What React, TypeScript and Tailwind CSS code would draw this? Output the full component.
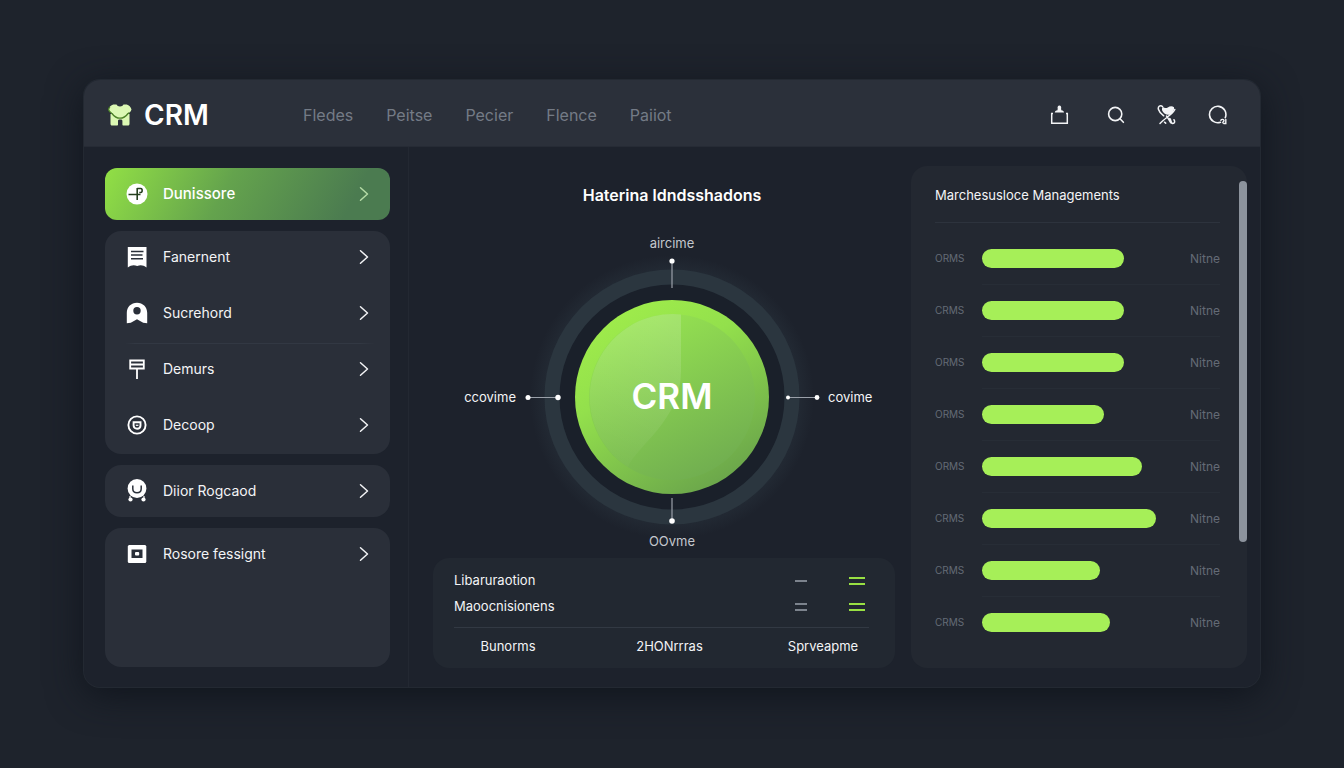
import { useState } from 'react'
import type { ReactNode } from 'react'

const NAV = ['Fledes', 'Peitse', 'Pecier', 'Flence', 'Paiiot']

const BARS = [
  { id: 1, label: 'ORMS', width: 71, value: 'Nitne' },
  { id: 2, label: 'CRMS', width: 71, value: 'Nitne' },
  { id: 3, label: 'ORMS', width: 71, value: 'Nitne' },
  { id: 4, label: 'ORMS', width: 61, value: 'Nitne' },
  { id: 5, label: 'ORMS', width: 80, value: 'Nitne' },
  { id: 6, label: 'CRMS', width: 87, value: 'Nitne' },
  { id: 7, label: 'CRMS', width: 59, value: 'Nitne' },
  { id: 8, label: 'CRMS', width: 64, value: 'Nitne' },
]

function Logo() {
  return (
    <svg className="size-6 shrink-0" viewBox="0 0 24 24" fill="#dcf8b4" aria-hidden="true">
      <path d="M2.5 11h19v10c0 .9-.6 1.500-1.500 1.500h-4.600c-.6 0-1-.4-1-1V18c0-1-.8-1.400-2.200-1.400S10 17 10 18v3.500c0 .6-.4 1-1 1H4c-.9 0-1.500-.6-1.500-1.500z" />
      <path
        d="M5.300 1.500h3.200c.6 1.300 1.800 2 3.500 2s2.900-.7 3.500-2h3.200c2.400.7 4.100 2.600 4.800 5-.5 1.900-1.800 3.200-3.500 4-2 2.800-4.700 4.700-8 4.700s-6-1.900-8-4.700c-1.700-.8-3-2.100-3.500-4 .7-2.400 2.400-4.300 4.800-5z"
        stroke="#4d8228"
        strokeWidth="1.300"
        strokeDasharray="0 26 29 40"
      />
    </svg>
  )
}

function Chevron() {
  return (
    <svg className="h-4 w-2.5 shrink-0" viewBox="0 0 10 16" fill="none" stroke="currentColor" strokeWidth="1.5" strokeLinecap="round" strokeLinejoin="round" aria-hidden="true">
      <path d="M1.500 1.800 8.500 8l-7 6.200" />
    </svg>
  )
}

const ICONS: Record<string, ReactNode> = {
  dashboard: (
    <>
      <circle cx="11" cy="11" r="10.5" fill="#fff" />
      <path d="M2.500 11.500h12M11.200 5v12M11.200 5.500h3.600c1.800 0 1.800 4 0 4h-1.500" stroke="#26401f" strokeWidth="1.6" fill="none" />
    </>
  ),
  receipt: (
    <>
      <path d="M1.800 1h18.700v20.500c-3.200-2.600-6.300-2.700-9.300-1.500-3-1.200-6.200-1.100-9.400 1.500z" fill="#fff" />
      <path d="M5 5.500h12.500M5 9h11.500M5 12.800h12" stroke="#2a303a" strokeWidth="1.5" />
    </>
  ),
  user: (
    <path fillRule="evenodd" fill="#fff" d="M11 .8c5.800 0 10.200 4.200 10.200 10V21.300l-4-.6L11 17.200l-6.200 3.500-4 .6V10.800C.8 5 5.200.8 11 .8zM11 5a3.700 3.700 0 1 0 0 7.400A3.700 3.700 0 0 0 11 5z" />
  ),
  sign: (
    <path d="M4.200 2.500h13.600v8H4.200zM4.200 6.500h13.600M11 10.500V21" fill="none" stroke="#fff" strokeWidth="1.8" />
  ),
  target: (
    <g fill="none" stroke="#fff" strokeWidth="1.9">
      <circle cx="11" cy="11" r="8.6" />
      <path d="M7.600 8.300h6.900v3.200c0 2-1.400 3.200-3.400 3.200s-3.500-1.200-3.500-3.200z" />
      <path d="M9.800 11.300h2.600" strokeWidth="1.2" />
    </g>
  ),
  smile: (
    <>
      <circle cx="11" cy="8.5" r="9.400" fill="#fff" />
      <path d="M6.800 5.500v3.300c0 2.500 1.800 4 4.200 4s4.200-1.500 4.200-4V5.500" fill="none" stroke="#2a303a" strokeWidth="1.5" />
      <circle cx="4.5" cy="19.5" r="2.100" fill="#fff" />
      <circle cx="17.5" cy="19.500" r="2.100" fill="#fff" />
      <path d="M4 16v3M18 16v3" stroke="#fff" strokeWidth="1.2" />
    </>
  ),
  square: (
    <>
      <rect x="1.8" y="2" width="18.5" height="18" rx="1.5" fill="#fff" />
      <rect x="5.500" y="6.500" width="11" height="8.500" fill="#2a303a" />
      <rect x="9" y="9" width="4.200" height="3.600" rx="1" fill="#fff" />
    </>
  ),
}

function MenuItem({ icon, label, divider }: { icon: string; label: string; divider?: boolean }) {
  return (
    <button
      type="button"
      className={`flex h-[52px] w-full cursor-pointer items-center text-left text-sm text-gray-100 ${divider ? 'bg-[linear-gradient(90deg,transparent_20px,#323843_30px,#323843_255px,transparent_270px)] bg-[length:100%_1px] bg-no-repeat' : ''}`}
    >
      <svg className="ml-[21px] size-[22px] shrink-0 overflow-visible" viewBox="0 0 22 22" aria-hidden="true">
        {ICONS[icon]}
      </svg>
      <span className="ml-[15px] flex-1">{label}</span>
      <span className="mr-[21px]">
        <Chevron />
      </span>
    </button>
  )
}

function Header() {
  const [active, setActive] = useState('')
  return (
    <header className="flex h-[67px] items-center border-b border-[#262b35] bg-[#2b303a] pt-[3px] pr-8">
      <div className="flex w-[219px] shrink-0 items-center gap-3 pl-6">
        <Logo />
        <span className="text-[28px] leading-8 font-semibold text-white">CRM</span>
      </div>
      <nav className="flex flex-1 gap-[33px] text-base text-[#747b86]">
        {NAV.map(item => (
          <a key={item} href="#" onClick={() => setActive(item)} className={active === item ? 'text-white' : 'hover:text-gray-300'}>
            {item}
          </a>
        ))}
      </nav>
      <div className="flex items-center gap-[31px] text-gray-100">
        <button type="button" aria-label="Inbox" className="mr-1.5 cursor-pointer">
          <svg className="size-5" viewBox="0 0 20 20" fill="none" stroke="currentColor" strokeWidth="1.5">
            <path d="M4 8.500H2.700v9.700h15.600V8.500H17" />
            <path d="M5.800 7.600c0-1.400 1-2 2.700-2.300L8.700 3.500C8.200 2 9 .4 10.400.4s2.200 1.600 1.700 3.100l.2 1.800c1.700.3 2.700.9 2.700 2.300z" fill="currentColor" stroke="none" />
          </svg>
        </button>
        <button type="button" aria-label="Search" className="cursor-pointer">
          <svg className="size-5" viewBox="0 0 20 20" fill="none" stroke="currentColor" strokeWidth="1.6" strokeLinecap="round">
            <circle cx="9.200" cy="9" r="6.600" />
            <path d="m14 13.800 3.400 3.500" />
          </svg>
        </button>
        <button type="button" aria-label="Tools" className="cursor-pointer">
          <svg className="size-5" viewBox="0 0 20 20" fill="none" stroke="currentColor" strokeWidth="1.5" strokeLinecap="round">
            <path d="M5.500 1.500C3.500-.2.500 1.500 1.500 4.500c.6 2.200 3 4.700 5.200 6.300" />
            <path d="M7.500 8.500C4.500 6 4.500 3.500 5.800 1.800c1.300 1.500 3.200 1.700 5 .6 2-1.300 4.600-1.400 6.200-.2.500 2-.6 5-3 6.700-2 1.300-4.500 1-6.500-.4z" fill="currentColor" stroke="none" />
            <path d="M17.800 4.500C16 9 8 13 3 18.500M9.500 11c1.800 2.200 2.700 4.500 4.300 6.800M12.800 13.500c1.500 1.500.8 5 3 5 1.800 0 2.500-2 1.200-3.800M7.500 17.200l1.200 1" />
          </svg>
        </button>
        <button type="button" aria-label="Account" className="cursor-pointer">
          <svg className="size-5" viewBox="0 0 20 20" fill="none" stroke="currentColor" strokeWidth="1.6" strokeLinecap="round">
            <path d="M12.500 17.200a8.200 8.200 0 1 1 4.800-4.600" />
            <path d="M12.800 15.200c1-1.200 3-1 3.200.3.100 1-1.300 1.200-1.200 2.300M17.800 14.500v4h-2" strokeWidth="1.4" />
          </svg>
        </button>
      </div>
    </header>
  )
}

function Sidebar() {
  return (
    <aside className="flex flex-col gap-[11px] border-r border-[#232832] pt-[21px] pr-[18px] pb-5 pl-[21px]">
      <button
        type="button"
        className="flex h-[52px] w-full cursor-pointer items-center rounded-xl bg-linear-[118deg,#92e045_0%,#64a34d_42%,#4b7b50_85%] text-left text-[15px] font-medium text-white"
      >
        <svg className="ml-[21px] size-[22px] shrink-0" viewBox="0 0 22 22" aria-hidden="true">
          {ICONS.dashboard}
        </svg>
        <span className="ml-[15px] flex-1">Dunissore</span>
        <span className="mr-[21px] text-[#b5dba6]">
          <Chevron />
        </span>
      </button>

      <div className="flex flex-col gap-1 rounded-2xl bg-[#2a2f39] pb-[3px]">
        <MenuItem icon="receipt" label="Fanernent" />
        <MenuItem icon="user" label="Sucrehord" />
        <MenuItem icon="sign" label="Demurs" divider />
        <MenuItem icon="target" label="Decoop" />
      </div>

      <div className="rounded-2xl bg-[#2a2f39]">
        <MenuItem icon="smile" label="Diior Rogcaod" />
      </div>

      <div className="min-h-[139px] flex-1 rounded-2xl bg-[#2a2f39]">
        <MenuItem icon="square" label="Rosore fessignt" />
      </div>
    </aside>
  )
}

function Dial() {
  return (
    <svg className="h-[272px] w-[296px] overflow-visible" viewBox="0 0 296 272" role="img" aria-label="CRM">
      <defs>
        <linearGradient id="disc" x1="0.2" y1="0.05" x2="0.75" y2="0.95">
          <stop offset="0" stopColor="#9fec4b" />
          <stop offset="0.35" stopColor="#93e04c" />
          <stop offset="1" stopColor="#6ba64b" />
        </linearGradient>
        <linearGradient id="inner" x1="0.2" y1="0" x2="0.7" y2="1">
          <stop offset="0" stopColor="#99e751" />
          <stop offset="1" stopColor="#70ad50" />
        </linearGradient>
        <linearGradient id="wedge" x1="0.6" y1="0" x2="0.4" y2="1">
          <stop offset="0" stopColor="#fff" stopOpacity="0.16" />
          <stop offset="1" stopColor="#fff" stopOpacity="0.02" />
        </linearGradient>
        <radialGradient id="glow">
          <stop offset="0.82" stopColor="#2b3640" stopOpacity="0.6" />
          <stop offset="1" stopColor="#2b3640" stopOpacity="0" />
        </radialGradient>
      </defs>
      <circle cx="148" cy="136" r="142" fill="url(#glow)" />
      <circle cx="148" cy="136" r="120" fill="#1a202a" stroke="#2b363f" strokeWidth="15" />
      <circle cx="148" cy="136" r="97" fill="url(#disc)" />
      <circle cx="148" cy="136" r="83" fill="url(#inner)" />
      <path d="M157 53.500A83 83 0 0 0 104 206C112 185 157 160 157 110z" fill="url(#wedge)" />
      <g stroke="#9aa0a9" strokeWidth="1.2">
        <path d="M148 0v27M148 237v24M4 136.500h30M264 136.500h29" />
      </g>
      <g fill="#fff">
        <circle cx="148" cy="0" r="2.600" />
        <circle cx="148" cy="260" r="2.800" />
        <circle cx="4" cy="136.500" r="2.500" />
        <circle cx="34" cy="136.500" r="2.700" />
        <circle cx="264" cy="136.500" r="2" />
        <circle cx="293" cy="136.500" r="2.400" />
      </g>
      <text x="148" y="148" textAnchor="middle" fill="#fff" className="text-[35px] font-semibold">
        CRM
      </text>
    </svg>
  )
}

function Dash({ double, green }: { double?: boolean; green?: boolean }) {
  return (
    <span className={`flex flex-col gap-1 ${green ? 'w-4 text-[#98e043]' : 'w-3 text-[#7c838d]'}`}>
      <span className="h-0.5 bg-current" />
      {double && <span className="h-0.5 bg-current" />}
    </span>
  )
}

function Overview() {
  return (
    <section className="flex flex-col pt-9 pr-4 pb-[19px] pl-6">
      <div className="pl-4 text-center text-[13px] leading-4 text-[#c3c7cd]">
        <h1 className="mb-7 text-base leading-6 font-semibold text-white">Haterina ldndsshadons</h1>
        <p>aircime</p>
        <div className="mt-2.5 grid grid-cols-[1fr_296px_1fr] items-center gap-2 text-gray-100">
          <span className="text-right">ccovime</span>
          <Dial />
          <span className="text-left">covime</span>
        </div>
        <p>OOvme</p>
      </div>

      <div className="mt-auto rounded-2xl bg-[#222831] pt-2.5 pr-[26px] pb-0.5 pl-[21px] text-[13px] text-gray-100">
        <div className="flex h-[26px] items-center">
          <span className="flex-1">Libaruraotion</span>
          <Dash />
          <span className="mr-1 ml-[42px]"><Dash double green /></span>
        </div>
        <div className="flex h-[26px] items-center">
          <span className="flex-1">Maoocnisionens</span>
          <Dash double />
          <span className="mr-1 ml-[42px]"><Dash double green /></span>
        </div>
        <div className="mt-[7px] grid h-[39px] grid-cols-[108px_1fr_92px] items-center border-t border-[#323943] text-center">
          <span>Bunorms</span>
          <span>2HONrrras</span>
          <span>Sprveapme</span>
        </div>
      </div>
    </section>
  )
}

function Management() {
  return (
    <section className="flex py-[19px] pr-[13px]">
      <div className="flex flex-1 rounded-2xl bg-[#232831]">
        <div className="flex-1 pr-[19px] pl-6">
          <h2 className="flex h-[57px] items-center border-b border-[#2d333d] pt-1 text-[13px] text-gray-100">
            Marchesusloce Managements
          </h2>
          <ul className="pt-[9px]">
            {BARS.map((b, i) => (
              <li key={b.id} className="flex h-[52px] items-center">
                <span className="w-[47px] text-[10px] text-[#646b76]">{b.label}</span>
                <div className={`flex h-[52px] flex-1 items-center ${i > 0 ? 'border-t border-[#272d36]' : 'border-t border-transparent'}`}>
                  <div className="flex-1">
                    <div className="h-[19px] rounded-full bg-[#a6ef58]" style={{ width: `${b.width}%` }} />
                  </div>
                  <span className="ml-2 text-xs text-[#646b76]">{b.value}</span>
                </div>
              </li>
            ))}
          </ul>
        </div>
        {/* scroll thumb */}
        <div className="mt-[15px] h-[361px] w-2 rounded-full bg-[#8c939d]" />
      </div>
    </section>
  )
}

export default function App() {
  return (
    <div className="min-h-screen bg-[#1e232c] px-[84px] py-20 font-['Inter','Liberation_Sans',sans-serif]">
      <div className="overflow-hidden rounded-2xl bg-[#1d222c] shadow-[0_0_0_1px_#232932,0_8px_36px_#10151d]">
        <Header />
        <main className="grid min-h-[540px] grid-cols-[325px_1fr_349px]">
          <Sidebar />
          <Overview />
          <Management />
        </main>
      </div>
    </div>
  )
}
